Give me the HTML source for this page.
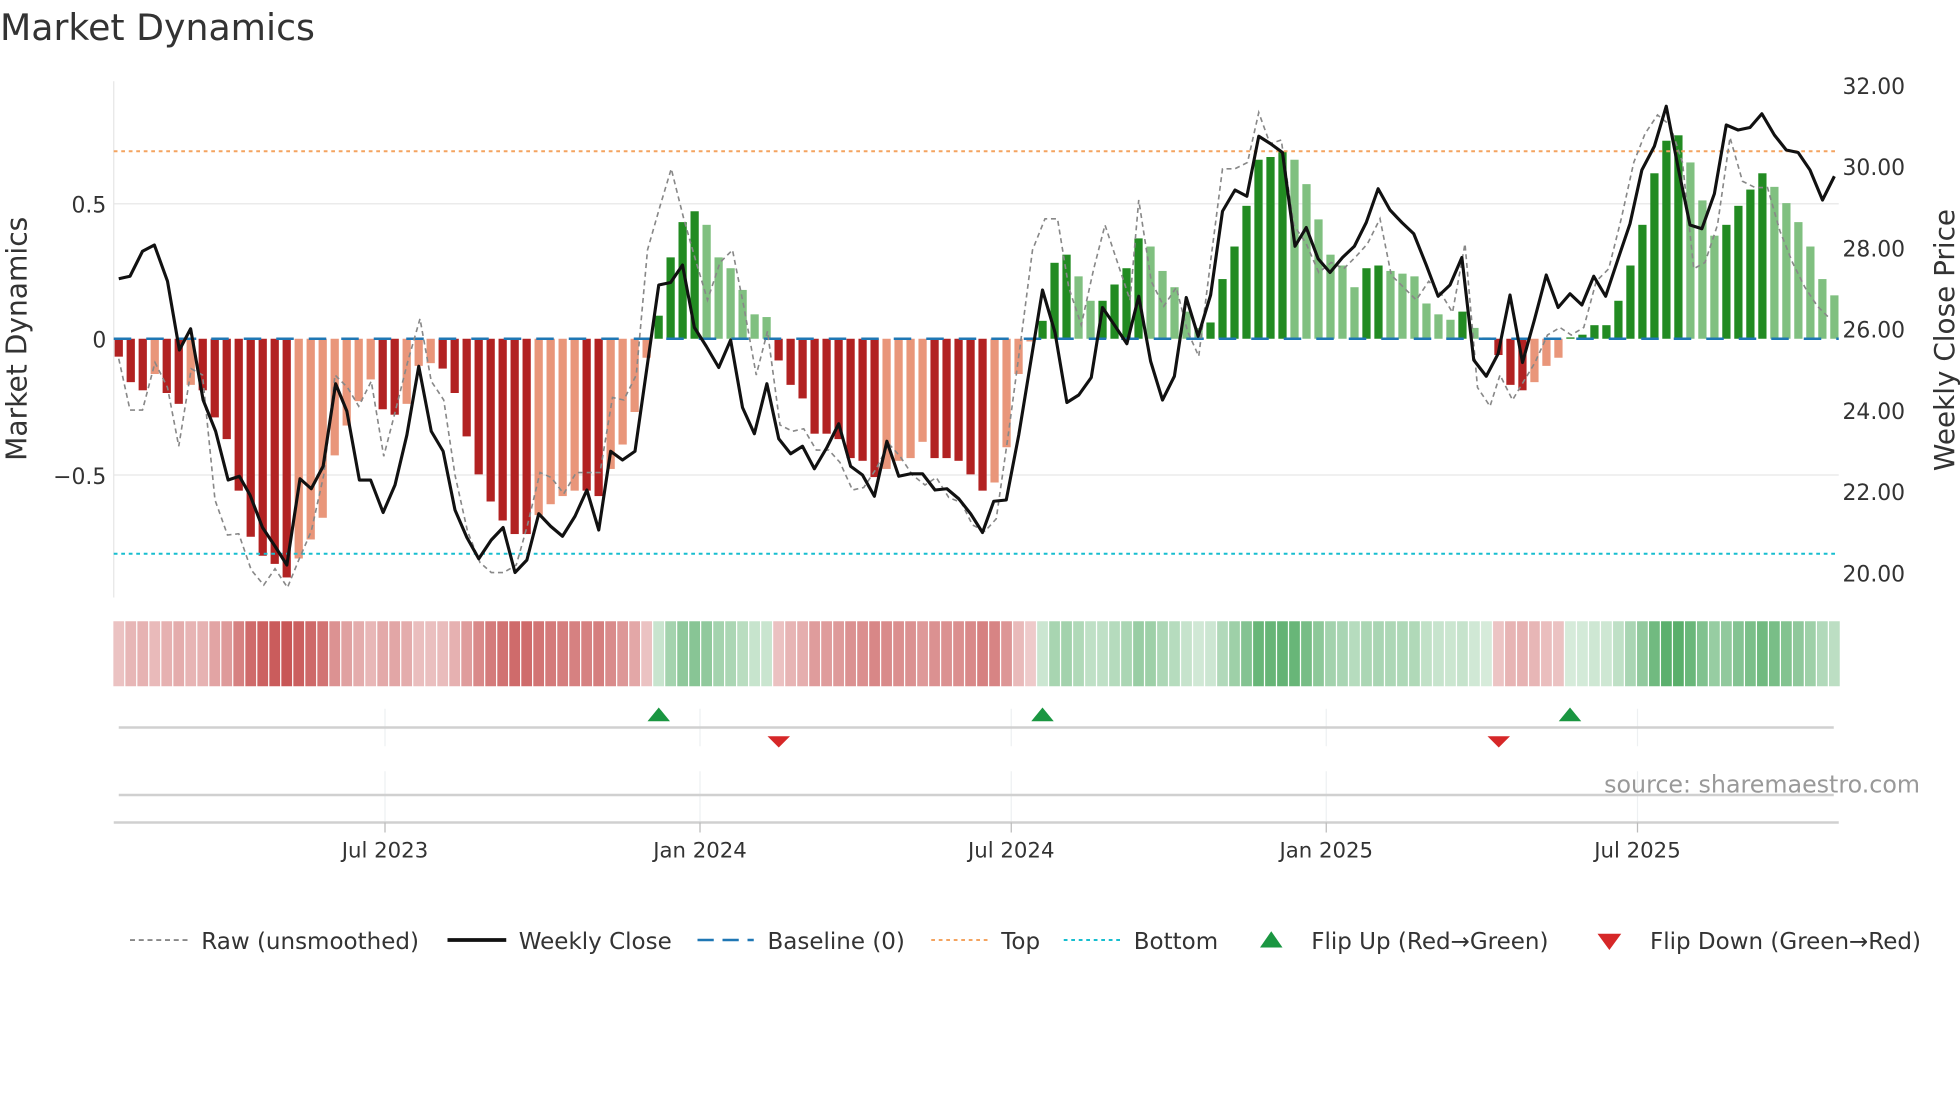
<!DOCTYPE html>
<html><head><meta charset="utf-8"><style>
html,body{margin:0;padding:0;background:#fff;}
svg{display:block;font-family:"DejaVu Sans","Liberation Sans",sans-serif;}
</style></head><body>
<svg id="s" width="1960" height="1102" viewBox="0 0 1568 881.6" preserveAspectRatio="none" xmlns="http://www.w3.org/2000/svg">
<text x="0" y="32" font-size="29" fill="#333">Market Dynamics</text>
<g stroke="#ebebeb" stroke-width="1.2"><line x1="91" y1="163" x2="1471" y2="163"/><line x1="91" y1="380" x2="1471" y2="380"/></g>
<line x1="91" y1="65" x2="91" y2="478" stroke="#e6e6e6" stroke-width="1"/>
<g id="bars"></g>
<line x1="91" y1="271" x2="1471" y2="271" stroke="#1f77b4" stroke-width="2" stroke-dasharray="14,12"/>
<line x1="91" y1="121" x2="1471" y2="121" stroke="#f4a460" stroke-width="1.6" stroke-dasharray="3,3"/>
<line x1="91" y1="443" x2="1471" y2="443" stroke="#17becf" stroke-width="1.6" stroke-dasharray="3,3"/>
<polyline id="raw" fill="none" stroke="#888" stroke-width="1.3" stroke-dasharray="4,3"/>
<polyline id="close" fill="none" stroke="#111" stroke-width="2.5" stroke-linejoin="round"/>
<g font-size="17.5" fill="#333" text-anchor="end">
<text x="85" y="170">0.5</text><text x="85" y="278">0</text><text x="85" y="387">−0.5</text></g>
<g font-size="17.5" fill="#333">
<text x="1474" y="75">32.00</text><text x="1474" y="140">30.00</text><text x="1474" y="205">28.00</text><text x="1474" y="270">26.00</text><text x="1474" y="335">24.00</text><text x="1474" y="400">22.00</text><text x="1474" y="465">20.00</text></g>
<text transform="translate(21,271) rotate(-90)" font-size="22.5" fill="#333" text-anchor="middle">Market Dynamics</text>
<text transform="translate(1563,272) rotate(-90)" font-size="22.3" fill="#333" text-anchor="middle">Weekly Close Price</text>
<g id="heat"></g>
<g stroke="#eef0f2" stroke-width="1">
<line x1="308" y1="567" x2="308" y2="597"/><line x1="560" y1="567" x2="560" y2="597"/><line x1="809" y1="567" x2="809" y2="597"/><line x1="1061" y1="567" x2="1061" y2="597"/><line x1="1310" y1="567" x2="1310" y2="597"/>
<line x1="308" y1="617" x2="308" y2="657"/><line x1="560" y1="617" x2="560" y2="657"/><line x1="809" y1="617" x2="809" y2="657"/><line x1="1061" y1="617" x2="1061" y2="657"/><line x1="1310" y1="617" x2="1310" y2="657"/></g>
<line x1="95" y1="582" x2="1467" y2="582" stroke="#d0d0d0" stroke-width="2"/>
<line x1="95" y1="636" x2="1467" y2="636" stroke="#d0d0d0" stroke-width="2"/>
<line x1="91" y1="658" x2="1471" y2="658" stroke="#d0d0d0" stroke-width="2"/>
<g fill="#1a9641"><polygon points="518,577 527,566 536,577"/><polygon points="825,577 834,566 843,577"/><polygon points="1247,577 1256,566 1265,577"/></g>
<g fill="#d62728"><polygon points="614,589 632,589 623,598"/><polygon points="1190,589 1208,589 1199,598"/></g>
<g stroke="#bbb" stroke-width="1"><line x1="308" y1="658" x2="308" y2="666"/><line x1="560" y1="658" x2="560" y2="666"/><line x1="809" y1="658" x2="809" y2="666"/><line x1="1061" y1="658" x2="1061" y2="666"/><line x1="1310" y1="658" x2="1310" y2="666"/></g>
<g font-size="17" fill="#333" text-anchor="middle">
<text x="308" y="686">Jul 2023</text><text x="560" y="686">Jan 2024</text><text x="809" y="686">Jul 2024</text><text x="1061" y="686">Jan 2025</text><text x="1310" y="686">Jul 2025</text></g>
<text x="1536" y="634" font-size="19" fill="#999" text-anchor="end">source: sharemaestro.com</text>
<g font-size="18.4" fill="#333">
<line x1="104" y1="752" x2="150" y2="752" stroke="#888" stroke-width="1.5" stroke-dasharray="4,3"/>
<text x="161" y="759">Raw (unsmoothed)</text>
<line x1="358" y1="752" x2="405" y2="752" stroke="#111" stroke-width="3"/>
<text x="415" y="759">Weekly Close</text>
<line x1="558" y1="752" x2="603" y2="752" stroke="#1f77b4" stroke-width="2" stroke-dasharray="13,7"/>
<text x="614" y="759">Baseline (0)</text>
<line x1="745" y1="752" x2="790" y2="752" stroke="#f4a460" stroke-width="1.6" stroke-dasharray="3,3"/>
<text x="801" y="759">Top</text>
<line x1="851" y1="752" x2="896" y2="752" stroke="#17becf" stroke-width="1.6" stroke-dasharray="3,3"/>
<text x="907" y="759">Bottom</text>
<polygon points="1008,758 1017,745 1026,758" fill="#1a9641"/>
<text x="1049" y="759">Flip Up (Red→Green)</text>
<polygon points="1278,747 1297,747 1287.5,760" fill="#d62728"/>
<text x="1320" y="759">Flip Down (Green→Red)</text>
</g>
</svg>
<script>
var V=[-0.066,-0.16,-0.19,-0.13,-0.2,-0.24,-0.17,-0.19,-0.29,-0.37,-0.56,-0.73,-0.8,-0.83,-0.88,-0.81,-0.74,-0.66,-0.43,-0.32,-0.23,-0.15,-0.26,-0.28,-0.24,-0.1,-0.09,-0.11,-0.2,-0.36,-0.5,-0.6,-0.67,-0.72,-0.72,-0.65,-0.61,-0.58,-0.56,-0.56,-0.58,-0.48,-0.39,-0.27,-0.07,0.085,0.3,0.43,0.47,0.42,0.3,0.26,0.18,0.09,0.08,-0.08,-0.17,-0.22,-0.35,-0.35,-0.37,-0.44,-0.45,-0.51,-0.48,-0.45,-0.44,-0.38,-0.44,-0.44,-0.45,-0.5,
-0.56,-0.53,-0.4,-0.13,-0.01,
0.066,0.28,0.31,0.23,0.14,0.14,0.2,0.26,0.37,0.34,0.25,0.19,0.1,0.04,0.06,0.22,0.34,0.49,0.66,0.67,0.69,0.66,0.57,0.44,0.31,0.27,0.19,0.26,0.27,0.25,0.24,0.23,0.13,0.09,0.07,0.1,0.04,0.005,-0.06,-0.17,-0.19,-0.16,-0.1,-0.07,0.005,0.015,0.05,0.05,0.14,0.27,0.42,0.61,0.73,0.75,0.65,0.51,0.38,0.42,0.49,0.55,0.61,0.56,0.5,0.43,0.34,0.22,0.16];
var N=V.length,x0=95,x1=1467.5,dx=(x1-x0)/(N-1),ns="http://www.w3.org/2000/svg";
var bars=document.getElementById('bars'),heat=document.getElementById('heat');
function el(t,a){var e=document.createElementNS(ns,t);for(var k in a)e.setAttribute(k,a[k]);return e;}
for(var i=0;i<N;i++){var v=V[i],x=x0+i*dx,prev=i?V[i-1]:0;
 var grow=Math.abs(v)>=Math.abs(prev)||(v*prev<0);
 var c=v<0?(grow?'#b22222':'#e9967a'):(grow?'#228b22':'#80c080');
 var h=Math.abs(v)*217;
 bars.appendChild(el('rect',{x:x-3.3,y:v>0?271-h:271,width:6.6,height:Math.max(h,0.5),fill:c}));
 var a=Math.min(1,Math.abs(v));
 var hc=v<0?'rgba(195,70,70,'+(0.28+0.72*a)+')':'rgba(70,165,90,'+(0.22+0.9*a)+')';
 heat.appendChild(el('rect',{x:x-dx/2+0.5,y:497,width:dx-1,height:52,fill:hc}));
}
var C=[[95,223],[104,221],[114,201],[123.5,196],[134,225],[143.5,280],[152.5,263],[162.5,320],[172.5,345],[182.5,384],[191.5,381],[200,396],[210,422],[220,437],[229.5,452],[240,383],[249,391],[258.5,373],[268.5,307],[277.5,329],[287.5,384],[296.5,384],[306.5,410],[316,388],[325.5,348],[335,293],[345,345],[354.5,361],[364,408],[373.5,430],[383,447],[393,432],[402.5,422],[412,458],[421.5,448],[431,411],[440.5,421],[450,429],[460,413],[469.5,392],[479,424],[488.5,361],[498,368],[508,361],[527,228],[536.5,226],[546,212],[555.5,262],[565,277],[575,294],[584.5,272],[594,326],[603.5,347],[613.5,307],[623,351],[632.5,363],[642,357],[651.5,375],[661.5,358],[671,339],[680.5,373],[690,380],[699.5,397],[709.5,353],[719,381],[728.5,379],[738,379],[748,392],[757.5,391],[767,399],[776.5,411],[786,426],[795,401],[805,400],[815,348],[834,232],[844,266],[853.5,322],[863,316],[873,302],[882,246],[891.5,260],[901.5,275],[911,237],[920.5,289],[930,320],[939.5,301],[949,238],[958.5,269],[968.5,236],[978,169],[988,152],[997.5,157],[1007,109],[1016.5,115],[1026,122],[1036,197],[1045,182],[1054.5,207],[1064,218],[1074,206],[1083.5,197],[1093,178],[1102.5,151],[1112,168],[1121.5,178],[1131,187],[1141,212],[1150.5,237],[1160,228],[1169.5,206],[1179,288],[1189,301],[1198.5,283],[1208,236],[1218,290],[1227.5,256],[1237,220],[1246.5,246],[1256,235],[1265.5,244],[1275,221],[1284.5,237],[1294.5,207],[1304,179],[1313.5,136],[1323.5,117],[1333,85],[1342.5,134],[1352,180],[1361.5,183],[1371.5,155],[1381,100],[1390.5,104],[1400,102],[1409.5,91],[1419.5,108],[1429,120],[1438.5,122],[1448,136],[1458,160],[1467.5,141]];
document.getElementById('close').setAttribute('points',C.map(function(p){return p.join(',')}).join(' '));
var R=[[95,287],[104,328],[114,328],[124,290],[134,310],[143,357],[153,295],[162,300],[172,400],[182,428],[191,427],[201,456],[211,468],[220,455],[230,470],[239,448],[249,425],[259,380],[268,300],[278,310],[287,325],[297,305],[307,365],[316,330],[326,290],[336,255],[345,305],[355,320],[364,380],[374,425],[384,450],[393,458],[403,458],[413,452],[422,420],[432,378],[441,382],[451,395],[461,378],[470,378],[480,378],[490,318],[499,320],[509,300],[518,200],[528,165],[537,135],[547,175],[557,210],[566,240],[576,210],[586,200],[595,245],[605,300],[614,265],[624,340],[634,345],[643,343],[653,360],[663,360],[672,370],[682,392],[691,390],[701,375],[711,355],[720,365],[730,380],[740,388],[749,382],[759,398],[769,402],[778,420],[788,425],[797,415],[807,345],[817,270],[826,200],[836,175],[846,175],[855,230],[865,260],[875,215],[884,180],[894,210],[904,240],[911,160],[921,225],[931,245],[941,230],[950,265],[959,285],[969,205],[978,135],[988,135],[998,130],[1007,90],[1016,115],[1025,112],[1035,180],[1045,195],[1055,218],[1065,210],[1075,215],[1085,205],[1094,195],[1104,175],[1113,220],[1123,230],[1133,240],[1143,225],[1153,235],[1162,250],[1172,195],[1182,310],[1192,325],[1200,300],[1210,320],[1219,305],[1228,290],[1238,268],[1248,262],[1257,268],[1267,262],[1277,225],[1287,215],[1297,175],[1307,130],[1316,107],[1326,92],[1336,100],[1346,130],[1355,215],[1364,210],[1374,180],[1384,110],[1394,145],[1404,150],[1414,150],[1424,185],[1434,210],[1444,230],[1454,245],[1464,255]];
document.getElementById('raw').setAttribute('points',R.map(function(p){return p.join(',')}).join(' '));
</script>
</body></html>
